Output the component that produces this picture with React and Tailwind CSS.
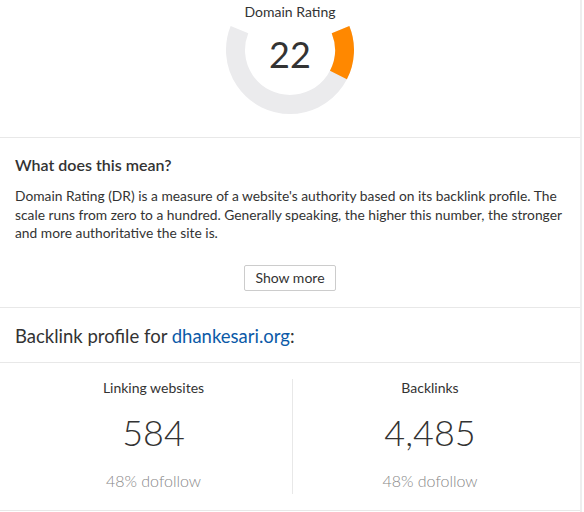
import React from 'react';

const cx = 64;
const cy = 28;
const r = 54.5;

// angle in degrees, 0 = right, counterclockwise positive
const pt = (deg) => {
  const a = (deg * Math.PI) / 180;
  return [cx + r * Math.cos(a), cy - r * Math.sin(a)];
};

// clockwise (on screen) from `from` down to `to`
const arc = (from, to) => {
  const [x1, y1] = pt(from);
  const [x2, y2] = pt(to);
  const large = from - to > 180 ? 1 : 0;
  return `M ${x1} ${y1} A ${r} ${r} 0 ${large} 1 ${x2} ${y2}`;
};

const Gauge = ({ value }) => {
  const start = 22;
  const total = 224;
  const fillDeg = (value / 100) * total;
  return (
    <div className="relative w-[128px] h-[96px]">
      <svg width="128" height="96" viewBox="0 0 128 96">
        <path d={arc(start, start - total)} fill="none" stroke="#ebebed" strokeWidth="19" />
        <path d={arc(start, start - fillDeg)} fill="none" stroke="#ff8800" strokeWidth="19" />
      </svg>
      <div className="absolute left-0 right-0 top-[8px] text-center text-[36px] leading-[48px] text-[#333]">
        {value}
      </div>
    </div>
  );
};

const Stat = ({ label, value, sub }) => (
  <div className="flex flex-col items-center">
    <div className="text-[14px] leading-[18px] text-[#333]">{label}</div>
    <div className="mt-[13px] text-[36px] leading-[44px] font-light text-[#333]">{value}</div>
    <div className="mt-[17px] text-[16px] leading-[20px] font-light text-[#888]">{sub}</div>
  </div>
);

export default function App() {
  return (
    <div className="w-[584px] h-[512px] bg-white font-['Lato',sans-serif]">
      <div className="w-[582px] border-r-2 border-[#eeeeee] h-[512px]">
        <div className="h-[138px] border-b border-[#e8e8e8] flex flex-col items-center pt-[2px]">
          <div className="text-[14px] leading-[20px] text-[#333]">Domain Rating</div>
          <Gauge value={22} />
        </div>

        <div className="border-b border-[#e8e8e8] px-[15px] pt-[16px] pb-[16px]">
          <h2 className="text-[16px] leading-[22px] font-semibold text-[#333]">What does this mean?</h2>
          <p className="mt-[11px] text-[13.8px] leading-[18.5px] text-[#333]">
            Domain Rating (DR) is a measure of a website's authority based on its backlink profile. The
            scale runs from zero to a hundred. Generally speaking, the higher this number, the stronger
            and more authoritative the site is.
          </p>
          <div className="mt-[22px] flex justify-center">
            <button className="h-[26px] px-[10px] border border-[#cccccc] rounded-[2px] bg-white text-[14px] text-[#333]">
              Show more
            </button>
          </div>
        </div>

        <div className="border-b border-[#e8e8e8] px-[15px] pt-[15px] pb-[13px]">
          <h2 className="text-[18.5px] leading-[26px] text-[#333]">
            Backlink profile for <a className="text-[#0b5aa8]">dhankesari.org</a>:
          </h2>
        </div>

        <div className="border-b border-[#e8e8e8] px-[15px] py-[16px] grid grid-cols-[278px_274px]">
          <div className="border-r border-[#e8e8e8] h-[115px]">
            <Stat label="Linking websites" value="584" sub="48% dofollow" />
          </div>
          <div className="h-[115px]">
            <Stat label="Backlinks" value="4,485" sub="48% dofollow" />
          </div>
        </div>
      </div>
    </div>
  );
}
